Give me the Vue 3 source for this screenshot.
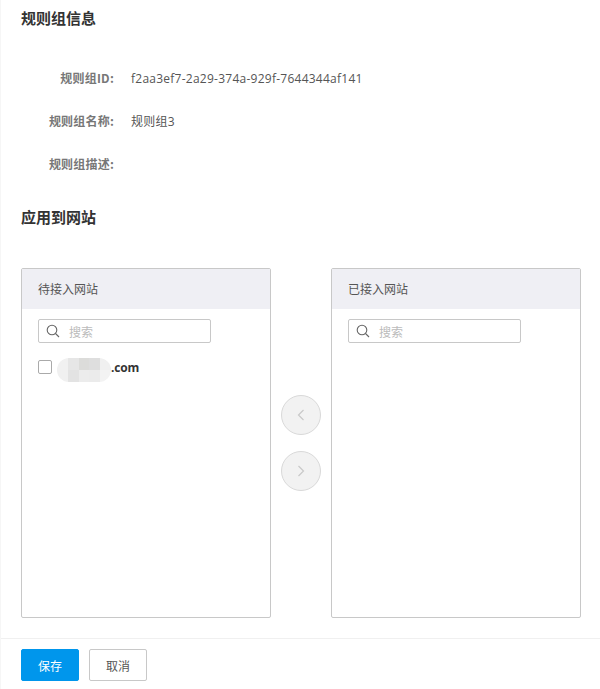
<script setup>
const infoRows = [
  { label: '规则组ID:', value: 'f2aa3ef7-2a29-374a-929f-7644344af141' },
  { label: '规则组名称:', value: '规则组3' },
  { label: '规则组描述:', value: '' },
]
const blurCells = [
  '#f1f1f1', '#e6e6e6', '#dcdcda', '#dedede', '#f0f0f0',
  '#f0f0f0', '#e3e3e3', '#ececec', '#ebebeb', '#f3f3f3',
]
</script>

<template>
  <div class="page">
    <div class="content">
      <h2 class="title">规则组信息</h2>
      <div class="info">
        <div v-for="row in infoRows" :key="row.label" class="info-row">
          <span class="info-label">{{ row.label }}</span>
          <span class="info-value">{{ row.value }}</span>
        </div>
      </div>
      <h2 class="title title-apply">应用到网站</h2>
      <div class="transfer">
        <section class="panel">
          <header class="panel-head">待接入网站</header>
          <div class="panel-body">
            <label class="search">
              <svg class="search-icon" width="14" height="14" viewBox="0 0 14 14" fill="none" stroke="#666" stroke-width="1.1">
                <circle cx="6" cy="6" r="4.8" />
                <path d="M9.5 9.5 L13 13" />
              </svg>
              <span class="placeholder">搜索</span>
            </label>
            <div class="site">
              <span class="checkbox"></span>
              <span class="blur">
                <i v-for="(c, i) in blurCells" :key="i" :style="{ background: c }"></i>
              </span>
              <span class="site-name">.com</span>
            </div>
          </div>
        </section>
        <div class="arrows">
          <button class="arrow" type="button">
            <svg width="10" height="12" viewBox="0 0 10 12" fill="none" stroke="#c9c9c9" stroke-width="1.2"><path d="M7.5 1 L2.5 6 L7.5 11" /></svg>
          </button>
          <button class="arrow" type="button">
            <svg width="10" height="12" viewBox="0 0 10 12" fill="none" stroke="#c9c9c9" stroke-width="1.2"><path d="M2.5 1 L7.5 6 L2.5 11" /></svg>
          </button>
        </div>
        <section class="panel">
          <header class="panel-head">已接入网站</header>
          <div class="panel-body">
            <label class="search">
              <svg class="search-icon" width="14" height="14" viewBox="0 0 14 14" fill="none" stroke="#666" stroke-width="1.1">
                <circle cx="6" cy="6" r="4.8" />
                <path d="M9.5 9.5 L13 13" />
              </svg>
              <span class="placeholder">搜索</span>
            </label>
          </div>
        </section>
      </div>
    </div>
    <footer class="footer">
      <button class="btn btn-primary" type="button">保存</button>
      <button class="btn" type="button">取消</button>
    </footer>
  </div>
</template>

<style>
html, body { margin: 0; background: #fff; }
</style>

<style scoped>
.page {
  height: 689px;
  box-sizing: border-box;
  border-left: 1px solid #f6f6f6;
  overflow: hidden;
  font-family: "Noto Sans CJK SC", "Open Sans", sans-serif;
  font-size: 12px;
  color: #444;
  display: flex;
  flex-direction: column;
}
.content {
  height: 638px;
  box-sizing: border-box;
  padding: 0 0 0 20px;
}
.title {
  margin: 0;
  height: 36px;
  line-height: 36px;
  font-size: 15px;
  font-weight: 700;
  color: #333;
}
.info {
  padding-top: 20px;
  height: 163px;
  box-sizing: border-box;
}
.info-row {
  display: flex;
  height: 43px;
  line-height: 43px;
}
.info-label {
  width: 93px;
  text-align: right;
  font-weight: 700;
  color: #777;
  white-space: nowrap;
  letter-spacing: 0.2px;
}
.info-value {
  margin: 1px 0 0 17px;
  color: #555;
  font-family: "Open Sans", "Noto Sans CJK SC", sans-serif;
  letter-spacing: 0.25px;
}
.title-apply { margin-bottom: 33px; }
.transfer {
  display: flex;
  align-items: stretch;
  height: 350px;
}
.panel {
  width: 250px;
  box-sizing: border-box;
  border: 1px solid #c8c8c8;
  border-radius: 2px;
}
.panel-head {
  height: 40px;
  line-height: 40px;
  padding-left: 16px;
  background: #efeff4;
  color: #555;
}
.panel-body { padding: 10px 16px; }
.search {
  display: flex;
  align-items: center;
  width: 173px;
  height: 24px;
  box-sizing: border-box;
  border: 1px solid #c8c8c8;
  border-radius: 2px;
  padding-left: 7px;
}
.search-icon { flex: none; }
.placeholder {
  margin-left: 9px;
  color: #bbb;
}
.site {
  display: flex;
  align-items: center;
  margin-top: 12px;
  height: 24px;
}
.checkbox {
  width: 14px;
  height: 14px;
  box-sizing: border-box;
  border: 1px solid #aaa;
  border-radius: 2px;
  background: #fff;
}
.blur {
  margin: 3px 0 0 5px;
  align-self: flex-start;
  width: 54px;
  height: 24px;
  display: grid;
  grid-template-columns: repeat(5, 1fr);
  grid-template-rows: repeat(2, 1fr);
  border-radius: 12px;
  overflow: hidden;
}
.blur i { display: block; }
.site-name {
  font-weight: 700;
  color: #333;
  font-family: "Open Sans", sans-serif;
  letter-spacing: -0.2px;
}
.arrows {
  width: 60px;
  display: flex;
  flex-direction: column;
  align-items: center;
  justify-content: center;
  gap: 16px;
}
.arrow {
  width: 40px;
  height: 40px;
  padding: 0;
  display: flex;
  align-items: center;
  justify-content: center;
  border: 1px solid #d9d9d9;
  border-radius: 50%;
  background: #f2f2f2;
}
.footer {
  flex: 1;
  display: flex;
  gap: 10px;
  padding: 10px 0 0 20px;
  border-top: 1px solid #f0f0f0;
}
.btn {
  width: 58px;
  height: 32px;
  box-sizing: border-box;
  padding: 0;
  border: 1px solid #c8c8c8;
  border-radius: 2px;
  background: #fff;
  color: #555;
  font: inherit;
}
.btn-primary {
  background: #0096ec;
  border-color: #0096ec;
  color: #fff;
}
</style>
